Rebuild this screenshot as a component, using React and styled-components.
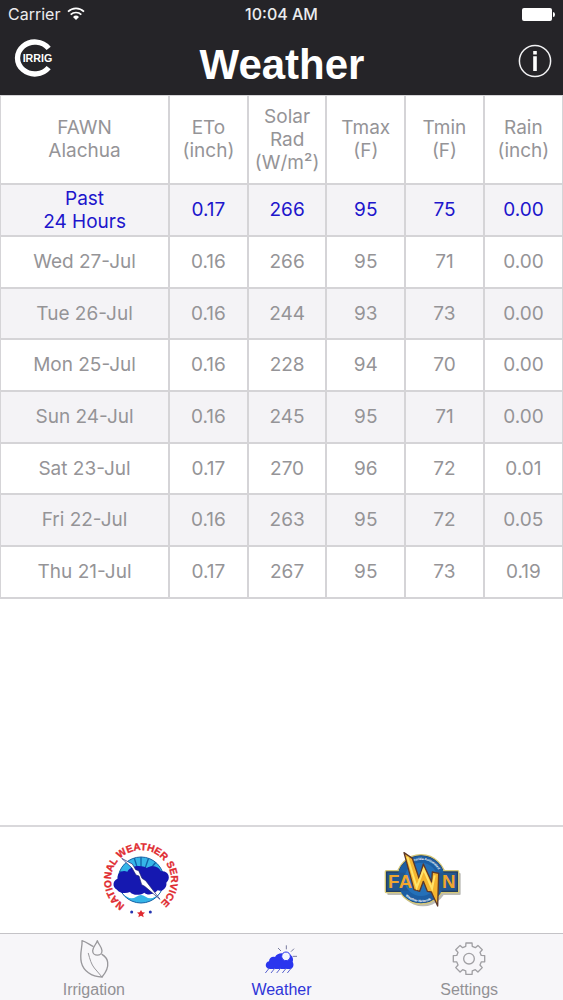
import React from "react";
import styled, { createGlobalStyle, css } from "styled-components";

const GlobalStyle = createGlobalStyle`
  *, *::before, *::after { box-sizing: border-box; }
  body {
    margin: 0;
    background: #ffffff;
    font-family: Inter, Roboto, sans-serif;
  }
`;

const Screen = styled.div`
  display: flex;
  flex-direction: column;
  min-height: 100vh;
`;

const Header = styled.header`
  background: #252428;
  color: #ffffff;
`;

const StatusBar = styled.div`
  display: grid;
  grid-template-columns: 1fr auto 1fr;
  align-items: center;
  height: 28px;
  padding: 0 8px;
  font-size: 16px;
  line-height: 20px;
  color: #ececee;
`;

const Carrier = styled.div`
  display: flex;
  align-items: center;
  gap: 7px;
`;

const Clock = styled.time`
  font-weight: 500;
`;

const Battery = styled.svg`
  justify-self: end;
`;

const NavBar = styled.div`
  display: grid;
  grid-template-columns: 1fr auto 1fr;
  align-items: center;
  height: 67px;
  padding: 0 11px 0 12px;
`;

const Title = styled.h1`
  margin: 0;
  padding-top: 6px;
  font-family: "Liberation Sans", Arial, sans-serif;
  font-size: 42px;
  line-height: 48px;
  font-weight: 700;
`;

const IconButton = styled.button`
  display: flex;
  justify-self: ${(p) => (p.$end ? "end" : "start")};
  padding: 0 0 ${(p) => (p.$end ? 2 : 8)}px;
  border: 0;
  background: none;
  color: inherit;
  cursor: pointer;
`;

const Main = styled.main`
  flex: 1;
`;

const Table = styled.table`
  width: 100%;
  table-layout: fixed;
  border-collapse: collapse;
  font-size: 19px;
  line-height: 23px;
  text-align: center;
  color: #959497;
`;

const cell = css`
  padding: 0;
  border: 2px solid #d5d4d7;
  font-weight: 400;

  &:first-child { border-left-width: 1px; }
  &:last-child { border-right-width: 1px; }
`;

const HeadCell = styled.th`
  ${cell}
  height: 88px;
  width: ${(p) => (p.$wide ? "30%" : "14%")};
  border-top-width: 1px;
`;

const RowHead = styled.th`
  ${cell}
`;

const Cell = styled.td`
  ${cell}
`;

const Row = styled.tr`
  height: 52px;
  color: ${(p) => (p.$current ? "#2015cc" : "inherit")};

  &:nth-child(odd) { background: #f4f3f6; }
  &:nth-child(3n) { height: 51px; }
`;

const Sources = styled.section`
  display: grid;
  grid-template-columns: 1fr 1fr;
  place-items: center;
  height: 108px;
  border-top: 2px solid #d9d8db;
`;

const SourceLink = styled.a`
  display: flex;
`;

const TabBar = styled.nav`
  display: grid;
  grid-template-columns: repeat(3, 1fr);
  height: 67px;
  border-top: 1px solid #c4c3c7;
  background: #f7f6f9;
`;

const Tab = styled.button`
  display: flex;
  flex-direction: column;
  align-items: center;
  padding: 5px 0 0;
  border: 0;
  background: none;
  font-family: "Liberation Sans", Arial, sans-serif;
  font-size: 16px;
  line-height: 22px;
  color: ${(p) => (p.$active ? "#2f35d8" : "#929195")};
  cursor: pointer;
`;

const WifiIcon = () => (
  <svg width="18" height="14" viewBox="0 0 54 42" fill="none" stroke="#ffffff" strokeWidth="5" aria-hidden="true">
    <path d="M3 14a34 34 0 0 1 48 0M11 23a23 23 0 0 1 32 0" />
    <path d="M27 39l-9-9a13 13 0 0 1 18 0z" fill="#ffffff" stroke="none" />
  </svg>
);

const BatteryIcon = () => (
  <Battery width="34" height="14" viewBox="0 0 34 14" role="img" aria-label="Battery full">
    <rect x="1" y="1" width="30" height="13" rx="2" fill="#ffffff" />
    <path d="M32 5q2 0 2 2.5t-2 2.5z" fill="#ffffff" />
  </Battery>
);

const IrrigLogo = () => (
  <svg width="42" height="40" viewBox="-3 0 126 120" aria-hidden="true">
    <path d="M107 31A52 48 0 1 0 107 89" fill="none" stroke="#ffffff" strokeWidth="16" />
    <text x="29" y="71" fill="#ffffff" fontFamily="Liberation Sans, Arial, sans-serif" fontWeight="700" fontSize="32">IRRIG</text>
  </svg>
);

const InfoIcon = () => (
  <svg width="34" height="34" viewBox="0 0 34 34" aria-hidden="true">
    <circle cx="17" cy="17" r="15.6" fill="none" stroke="#f2f2f4" strokeWidth="1.5" />
    <path d="M15.2 7h3.6v3.4h-3.6zM15.2 12.2h3.6V27h-3.6z" fill="#ffffff" />
  </svg>
);

const NwsLogo = () => (
  <svg width="80" height="80" viewBox="0 0 240 240" aria-hidden="true">
    <defs>
      <path id="nws-ring" d="M73 197A90 90 0 1 1 177 190" />
      <clipPath id="nws-disc"><circle cx="120" cy="120" r="69" /></clipPath>
    </defs>
    <g clipPath="url(#nws-disc)">
      <rect x="50" y="50" width="140" height="140" fill="#35b5e8" />
      <path d="M120 120L74 58M120 120L98 48M120 120V46M120 120L145 48M120 120L170 60M120 120L192 90M120 120L48 92" stroke="#1262a8" strokeWidth="4" />
      <rect x="50" y="138" width="140" height="60" fill="#ffffff" />
      <path d="M50 170q14-10 28 0t28 0 28 0 28 0 28 0v30H50z" fill="#35b5e8" />
    </g>
    <circle cx="120" cy="120" r="69" fill="none" stroke="#1562a6" strokeWidth="3" />
    <path d="M48 149C32 141 36 120 50 116C48 98 64 88 79 95C90 76 121 74 137 84C151 74 174 79 180 94C203 91 211 116 196 128C199 142 184 157 170 151C158 166 137 166 130 158C116 168 94 166 87 156C74 162 55 160 48 149Z" fill="#1518b0" />
    <path d="M62 55L94 72L104 89L113 92L123 115L134 122L177 178L131 139L122 134L114 108L105 105L93 84Z" fill="#ffffff" stroke="#1b2070" strokeWidth="2" />
    <text fill="#e02a30" fontFamily="Liberation Sans, Arial, sans-serif" fontWeight="700" fontSize="30" stroke="#e02a30" strokeWidth="1">
      <textPath href="#nws-ring" startOffset="50%" textAnchor="middle">NATIONAL WEATHER SERVICE</textPath>
    </text>
    <path d="M120 210l4 7 8 .5-6 6 2 8-8-4-8 4 2-8-6-6 8-.500z" fill="#e02a30" />
    <circle cx="92" cy="216" r="4.500" fill="#2434b0" />
    <circle cx="148" cy="216" r="4.500" fill="#2434b0" />
  </svg>
);

const FawnLogo = () => (
  <svg width="80" height="60" viewBox="0 0 240 180" aria-hidden="true">
    <defs>
      <path id="fawn-top" d="M92 36A58 58 0 0 1 172 66" />
      <path id="fawn-bottom" d="M71 138A68 68 0 0 0 156 144" />
    </defs>
    <g fill="#8f8f86" opacity="0.6" transform="translate(6 7)">
      <circle cx="117" cy="88" r="74" />
      <rect x="10" y="62" width="220" height="66" rx="3" />
    </g>
    <g fill="#233f63" stroke="#d5c878" strokeWidth="4">
      <circle cx="117" cy="88" r="74" />
      <rect x="10" y="62" width="220" height="66" rx="3" />
    </g>
    <circle cx="117" cy="88" r="71" fill="#1d5ea3" />
    <rect x="16" y="68" width="208" height="54" fill="#23578f" />
    <circle cx="117" cy="88" r="50" fill="#2470b8" />
    <g fill="#f0a62e" fontFamily="Liberation Sans, Arial, sans-serif" fontWeight="700" fontSize="56">
      <text x="18" y="115">F</text>
      <text x="50" y="115">A</text>
      <text x="180" y="115">N</text>
    </g>
    <g fill="#ffffff" fontFamily="Liberation Sans, Arial, sans-serif" fontWeight="700" fontSize="10">
      <text><textPath href="#fawn-top">Florida Automated</textPath></text>
      <text><textPath href="#fawn-bottom">Weather Network</textPath></text>
    </g>
    <path d="M66 8L91 25L111 85L124 42L149 96L151 66L170 70L167 168L148 126L136 124L124 94L113 124L96 119Z" fill="#f5b52f" stroke="#5d3829" strokeWidth="4" strokeLinejoin="round" />
    <path d="M76 20L104 112L125 58L150 116L158 76" fill="none" stroke="#ffe46a" strokeWidth="6" />
  </svg>
);

const LeafIcon = () => (
  <svg width="36" height="40" viewBox="0 0 108 120" fill="none" stroke="#99989c" strokeWidth="4" strokeLinejoin="round" strokeLinecap="round" aria-hidden="true">
    <path d="M51 22C41 17 31 9 18 5C20 24 10 42 16 70C22 95 46 114 78 114C90 100 97 84 95 70C94 58 86 51 78 46" />
    <path d="M64 5C60 17 50 25 50 35C50 53 78 53 78 35C78 25 68 17 64 5Z" />
    <path d="M37 43C42 62 46 76 55 87L78 114" strokeWidth="3" />
  </svg>
);

const CloudIcon = () => (
  <svg width="36" height="40" viewBox="0 0 108 120" aria-hidden="true">
    <path d="M19 90C5 88 5 70 18 67C18 56 28 51 36 54C42 43 57 40 67 46C82 40 94 55 89 68C95 80 89 90 79 90Z" fill="#2a35ee" />
    <circle cx="69" cy="52" r="13" fill="#f2f4ff" stroke="#2a35ee" strokeWidth="3" />
    <path d="M70 31V19M54 36L45 27M84 38L93 29M89 52H102" stroke="#777a9e" strokeWidth="3" />
    <path d="M19 87L7 102M36 87L24 102M53 87L41 102M70 87L58 102M85 87L73 102" stroke="#5962d0" strokeWidth="3" />
  </svg>
);

const GEAR_POINTS = Array.from({ length: 8 }, (_, tooth) =>
  [[-15, 38], [-11, 48], [11, 48], [15, 38]].map(([deg, radius]) => {
    const angle = ((tooth * 45 + deg) * Math.PI) / 180;
    return `${(54 + radius * Math.sin(angle)).toFixed(1)},${(59 - radius * Math.cos(angle)).toFixed(1)}`;
  }).join(" ")
).join(" ");

const GearIcon = () => (
  <svg width="36" height="40" viewBox="0 0 108 120" fill="none" stroke="#a09fa3" strokeWidth="4" strokeLinejoin="round" aria-hidden="true">
    <polygon points={GEAR_POINTS} />
    <circle cx="54" cy="59" r="16" />
  </svg>
);

const COLUMNS = [
  ["FAWN", "Alachua"],
  ["ETo", "(inch)"],
  ["Solar", "Rad", "(W/m²)"],
  ["Tmax", "(F)"],
  ["Tmin", "(F)"],
  ["Rain", "(inch)"],
];

const DAYS = [
  { label: ["Past", "24 Hours"], values: ["0.17", "266", "95", "75", "0.00"], current: true },
  { label: ["Wed 27-Jul"], values: ["0.16", "266", "95", "71", "0.00"] },
  { label: ["Tue 26-Jul"], values: ["0.16", "244", "93", "73", "0.00"] },
  { label: ["Mon 25-Jul"], values: ["0.16", "228", "94", "70", "0.00"] },
  { label: ["Sun 24-Jul"], values: ["0.16", "245", "95", "71", "0.00"] },
  { label: ["Sat 23-Jul"], values: ["0.17", "270", "96", "72", "0.01"] },
  { label: ["Fri 22-Jul"], values: ["0.16", "263", "95", "72", "0.05"] },
  { label: ["Thu 21-Jul"], values: ["0.17", "267", "95", "73", "0.19"] },
];

const TABS = [
  { label: "Irrigation", Icon: LeafIcon },
  { label: "Weather", Icon: CloudIcon, active: true },
  { label: "Settings", Icon: GearIcon },
];

const Lines = ({ lines }) =>
  lines.map((line, i) => (
    <React.Fragment key={line}>
      {i > 0 && <br />}
      {line}
    </React.Fragment>
  ));

export default function App() {
  return (
    <Screen>
      <GlobalStyle />
      <Header>
        <StatusBar>
          <Carrier>Carrier <WifiIcon /></Carrier>
          <Clock>10:04 AM</Clock>
          <BatteryIcon />
        </StatusBar>
        <NavBar>
          <IconButton type="button" aria-label="Home"><IrrigLogo /></IconButton>
          <Title>Weather</Title>
          <IconButton type="button" aria-label="Information" $end><InfoIcon /></IconButton>
        </NavBar>
      </Header>
      <Main>
        <Table>
          <thead>
            <tr>
              {COLUMNS.map((lines, i) => (
                <HeadCell key={lines[0]} scope="col" $wide={i === 0}><Lines lines={lines} /></HeadCell>
              ))}
            </tr>
          </thead>
          <tbody>
            {DAYS.map((day) => (
              <Row key={day.label[0]} $current={day.current}>
                <RowHead scope="row"><Lines lines={day.label} /></RowHead>
                {day.values.map((value, i) => <Cell key={i}>{value}</Cell>)}
              </Row>
            ))}
          </tbody>
        </Table>
      </Main>
      <Sources>
        <SourceLink href="#nws" aria-label="National Weather Service"><NwsLogo /></SourceLink>
        <SourceLink href="#fawn" aria-label="FAWN"><FawnLogo /></SourceLink>
      </Sources>
      <TabBar>
        {TABS.map(({ label, Icon, active }) => (
          <Tab key={label} type="button" $active={active} aria-current={active ? "page" : undefined}>
            <Icon />
            {label}
          </Tab>
        ))}
      </TabBar>
    </Screen>
  );
}
